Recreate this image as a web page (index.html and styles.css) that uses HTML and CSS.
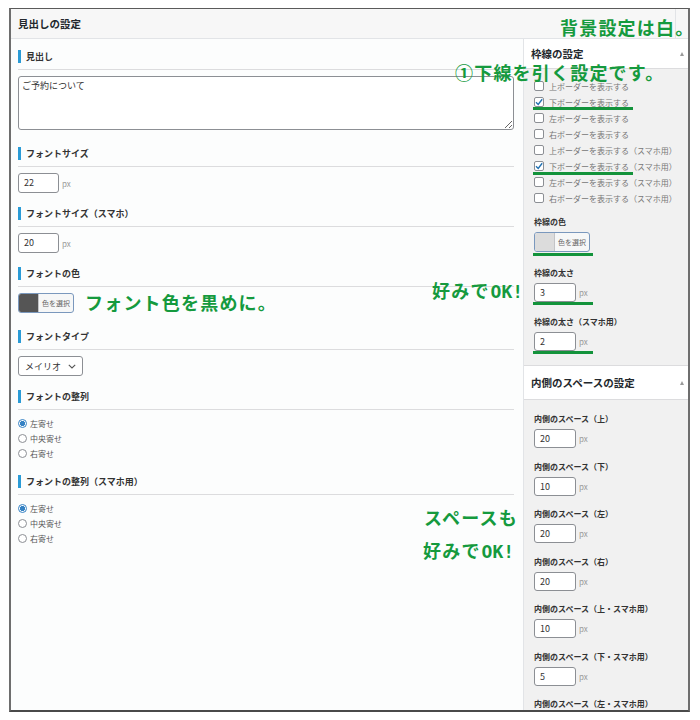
FILE: index.html
```html
<!DOCTYPE html>
<html lang="ja">
<head>
<meta charset="utf-8">
<title>見出しの設定</title>
<link rel="stylesheet" href="styles.css">
</head>
<body>
<div class="frame">
  <div class="topbar">
    <div class="title">見出しの設定</div>
    <div class="toggle"></div>
  </div>
  <div class="content">
    <div class="main">
      <section class="field">
        <h3 class="fhead">見出し</h3>
        <textarea class="ta">ご予約について</textarea>
      </section>
      <section class="field gap-lg">
        <h3 class="fhead">フォントサイズ</h3>
        <div class="num"><span class="inp">22</span><span class="px">px</span></div>
      </section>
      <section class="field">
        <h3 class="fhead">フォントサイズ（スマホ）</h3>
        <div class="num"><span class="inp">20</span><span class="px">px</span></div>
      </section>
      <section class="field">
        <h3 class="fhead">フォントの色</h3>
        <div class="cbtn"><span class="sw dark"></span><span class="lbl">色を選択</span></div>
      </section>
      <section class="field gap-lg">
        <h3 class="fhead">フォントタイプ</h3>
        <div class="sel"><span>メイリオ</span><svg width="8" height="5" viewBox="0 0 8 5"><path d="M0.8 0.8 L4 4 L7.2 0.8" fill="none" stroke="#555" stroke-width="1.1"/></svg></div>
      </section>
      <section class="field">
        <h3 class="fhead">フォントの整列</h3>
        <ul class="radios">
          <li><span class="rd on"></span>左寄せ</li>
          <li><span class="rd"></span>中央寄せ</li>
          <li><span class="rd"></span>右寄せ</li>
        </ul>
      </section>
      <section class="field">
        <h3 class="fhead">フォントの整列（スマホ用）</h3>
        <ul class="radios">
          <li><span class="rd on"></span>左寄せ</li>
          <li><span class="rd"></span>中央寄せ</li>
          <li><span class="rd"></span>右寄せ</li>
        </ul>
      </section>
    </div>
    <aside class="side">
      <div class="panel">
        <div class="phead"><span>枠線の設定</span><i class="tri"></i></div>
        <div class="pbody p1">
          <ul class="checks">
            <li><span class="cb"></span>上ボーダーを表示する</li>
            <li><span class="cb"><svg width="8" height="8" viewBox="0 0 8 8"><path d="M1 4.2 L3.2 6.4 L7.2 1.2" fill="none" stroke="#2271b1" stroke-width="1.4"/></svg></span>下ボーダーを表示する</li>
            <li><span class="cb"></span>左ボーダーを表示する</li>
            <li><span class="cb"></span>右ボーダーを表示する</li>
            <li><span class="cb"></span>上ボーダーを表示する（スマホ用）</li>
            <li><span class="cb"><svg width="8" height="8" viewBox="0 0 8 8"><path d="M1 4.2 L3.2 6.4 L7.2 1.2" fill="none" stroke="#2271b1" stroke-width="1.4"/></svg></span>下ボーダーを表示する（スマホ用）</li>
            <li><span class="cb"></span>左ボーダーを表示する（スマホ用）</li>
            <li><span class="cb"></span>右ボーダーを表示する（スマホ用）</li>
          </ul>
          <div class="plabel l-color">枠線の色</div>
          <div class="cbtn side-c"><span class="sw light"></span><span class="lbl">色を選択</span></div>
          <div class="plabel l-w">枠線の太さ</div>
          <div class="num sn n-w"><span class="inp">3</span><span class="px">px</span></div>
          <div class="plabel l-ws">枠線の太さ（スマホ用）</div>
          <div class="num sn n-ws"><span class="inp">2</span><span class="px">px</span></div>
        </div>
      </div>
      <div class="panel panel2">
        <div class="phead tall"><span>内側のスペースの設定</span><i class="tri"></i></div>
        <div class="pbody p2">
          <div class="pitem"><div class="plabel">内側のスペース（上）</div><div class="num sn"><span class="inp">20</span><span class="px">px</span></div></div>
          <div class="pitem"><div class="plabel">内側のスペース（下）</div><div class="num sn"><span class="inp">10</span><span class="px">px</span></div></div>
          <div class="pitem"><div class="plabel">内側のスペース（左）</div><div class="num sn"><span class="inp">20</span><span class="px">px</span></div></div>
          <div class="pitem"><div class="plabel">内側のスペース（右）</div><div class="num sn"><span class="inp">20</span><span class="px">px</span></div></div>
          <div class="pitem"><div class="plabel">内側のスペース（上・スマホ用）</div><div class="num sn"><span class="inp">10</span><span class="px">px</span></div></div>
          <div class="pitem"><div class="plabel">内側のスペース（下・スマホ用）</div><div class="num sn"><span class="inp">5</span><span class="px">px</span></div></div>
          <div class="pitem"><div class="plabel">内側のスペース（左・スマホ用）</div></div>
        </div>
      </div>
    </aside>
  </div>
</div>

<div class="note n1">背景設定は白。</div>
<div class="note n2">①下線を引く設定です。</div>
<div class="note n3">フォント色を黒めに。</div>
<div class="note n4">好みで<span class="latin">OK!</span></div>
<div class="note n5">スペースも</div>
<div class="note n6">好みで<span class="latin">OK!</span></div>

<div class="uline u1"></div>
<div class="uline u2"></div>
<div class="uline u3"></div>
<div class="uline u4"></div>
<div class="uline u5"></div>
</body>
</html>
```

FILE: styles.css
```css
* { box-sizing: border-box; }
html, body { margin: 0; padding: 0; background: #fff; }
body {
  position: relative;
  width: 700px;
  height: 720px;
  overflow: hidden;
  font-family: "Noto Sans CJK JP", "Noto Sans", sans-serif;
  color: #333;
}

.frame {
  margin: 8px 0 0 9px;
  width: 681px;
  height: 704px;
  border: 2px solid #6e6e6e;
  border-top: 1px solid #5a5a5a;
  border-bottom-color: #4a4a4a;
  display: flex;
  flex-direction: column;
  background: #fcfdfd;
}

.topbar {
  height: 30px;
  display: flex;
  background: #f7f7f7;
  border-bottom: 1px solid #e2e4e7;
}
.title {
  flex: 1;
  padding-left: 7px;
  font-size: 10.5px;
  font-weight: bold;
  line-height: 29px;
  color: #23282d;
}
.toggle { width: 13px; border-left: 1px solid #e2e4e7; }

.content { flex: 1; display: flex; min-height: 0; }

.main {
  width: 512px;
  padding: 4px 9px 0 7px;
  background: #fcfdfd;
}

.field { margin-top: 7px; }
.field:first-child { margin-top: 0; }
.field.gap-lg { margin-top: 10px; }

.fhead {
  margin: 0;
  height: 27px;
  border-bottom: 1px solid #dcdcde;
  display: flex;
  align-items: center;
  font-size: 9px;
  font-weight: bold;
  color: #333;
}
.fhead::before {
  content: "";
  width: 3px;
  height: 13px;
  background: #2a9bd6;
  margin-right: 5px;
}

.ta {
  display: block;
  margin: 6px 0 0;
  width: 496px;
  height: 54px;
  border: 1px solid #8c8f94;
  border-radius: 3px;
  padding: 2px 3px;
  font-family: "Noto Sans CJK JP", sans-serif;
  font-size: 9px;
  line-height: 14px;
  color: #333;
  background: #fff;
  resize: vertical;
}

.num { display: flex; align-items: center; margin-top: 6px; }
.inp {
  width: 41px;
  height: 20px;
  border: 1px solid #8c8f94;
  border-radius: 3px;
  background: #fff;
  font-size: 9px;
  line-height: 18px;
  padding-left: 5px;
  color: #333;
}
.px { font-size: 8px; color: #999; margin-left: 3px; }

.cbtn {
  display: flex;
  width: 56px;
  height: 20px;
  margin-top: 6px;
  border: 1px solid #7a98bd;
  border-radius: 3px;
  overflow: hidden;
  background: #f6f7f7;
}
.sw { width: 19px; }
.sw.dark { background: #555; }
.sw.light { background: #dcdcdc; }
.cbtn .lbl {
  flex: 1;
  display: flex;
  align-items: center;
  justify-content: center;
  font-size: 7px;
  color: #666;
  border-left: 1px solid #c3c4c7;
}

.sel {
  display: flex;
  align-items: center;
  justify-content: space-between;
  width: 65px;
  height: 20px;
  margin-top: 6px;
  padding: 0 6px;
  border: 1px solid #8c8f94;
  border-radius: 3px;
  background: #fff;
  font-size: 9px;
  color: #333;
}

.radios { list-style: none; margin: 6px 0 0; padding: 0; }
.radios li {
  height: 15px;
  display: flex;
  align-items: center;
  font-size: 8px;
  color: #555;
}
.rd {
  width: 9px;
  height: 9px;
  border: 1px solid #8c8f94;
  border-radius: 50%;
  margin-right: 3px;
  background: #fff;
}
.rd.on {
  border-color: #3582c4;
  background: radial-gradient(circle, #3582c4 0 2.3px, #fff 2.9px);
}

/* sidebar */
.side {
  flex: 1;
  background: #f1f1f1;
  border-left: 1px solid #e2e4e7;
  overflow: hidden;
}
.phead {
  height: 30px;
  display: flex;
  align-items: center;
  justify-content: space-between;
  padding: 0 4px 0 7px;
  background: #fff;
  border-bottom: 1px solid #dcdcde;
  font-size: 10.5px;
  font-weight: bold;
  color: #23282d;
}
.phead.tall { height: 34px; }
.tri {
  width: 0;
  height: 0;
  border-left: 2.5px solid transparent;
  border-right: 2.5px solid transparent;
  border-bottom: 4px solid #9a9a9a;
}
.panel2 { border-top: 1px solid #dcdcde; }

.pbody { padding-left: 10px; }
.p1 { padding-top: 9px; padding-bottom: 14px; }
.p2 { padding-top: 12px; }

.checks { list-style: none; margin: 0; padding: 0; }
.checks li {
  height: 16px;
  display: flex;
  align-items: center;
  font-size: 8px;
  color: #777;
  white-space: nowrap;
}
.cb {
  width: 10px;
  height: 10px;
  border: 1px solid #8c8f94;
  border-radius: 2px;
  background: #fff;
  margin-right: 5px;
  display: flex;
  align-items: center;
  justify-content: center;
}

.plabel {
  height: 14px;
  line-height: 14px;
  font-size: 8px;
  font-weight: bold;
  color: #333;
  white-space: nowrap;
}
.l-color { margin-top: 9px; }
.side-c { margin-top: 3px; }
.l-w { margin-top: 14px; }
.n-w { margin-top: 4px; }
.l-ws { margin-top: 13px; }
.n-ws { margin-top: 2px; }

.sn { margin-top: 3px; }
.sn .inp { width: 42px; height: 19px; line-height: 17px; }
.pitem { margin-bottom: 11.5px; }

/* annotations */
.note {
  position: absolute;
  font-family: "Noto Sans CJK JP", sans-serif;
  font-weight: bold;
  font-size: 18px;
  line-height: 20px;
  letter-spacing: 1.2px;
  color: #159a3e;
  white-space: nowrap;
}
.note .latin {
  font-family: "DejaVu Sans Mono", monospace;
  letter-spacing: 0;
  margin-left: 1px;
}
.n1 { left: 560px; top: 17px; }
.n2 { left: 455px; top: 62px; }
.n3 { left: 85px; top: 292px; }
.n4 { left: 432px; top: 280px; }
.n5 { left: 424px; top: 507px; }
.n6 { left: 423px; top: 540px; }

.uline { position: absolute; height: 3px; background: #13933b; }
.u1 { left: 533px; top: 107px; width: 100px; }
.u2 { left: 533px; top: 172px; width: 100px; }
.u3 { left: 533px; top: 253px; width: 60px; }
.u4 { left: 533px; top: 302px; width: 60px; }
.u5 { left: 533px; top: 351px; width: 60px; }
```
